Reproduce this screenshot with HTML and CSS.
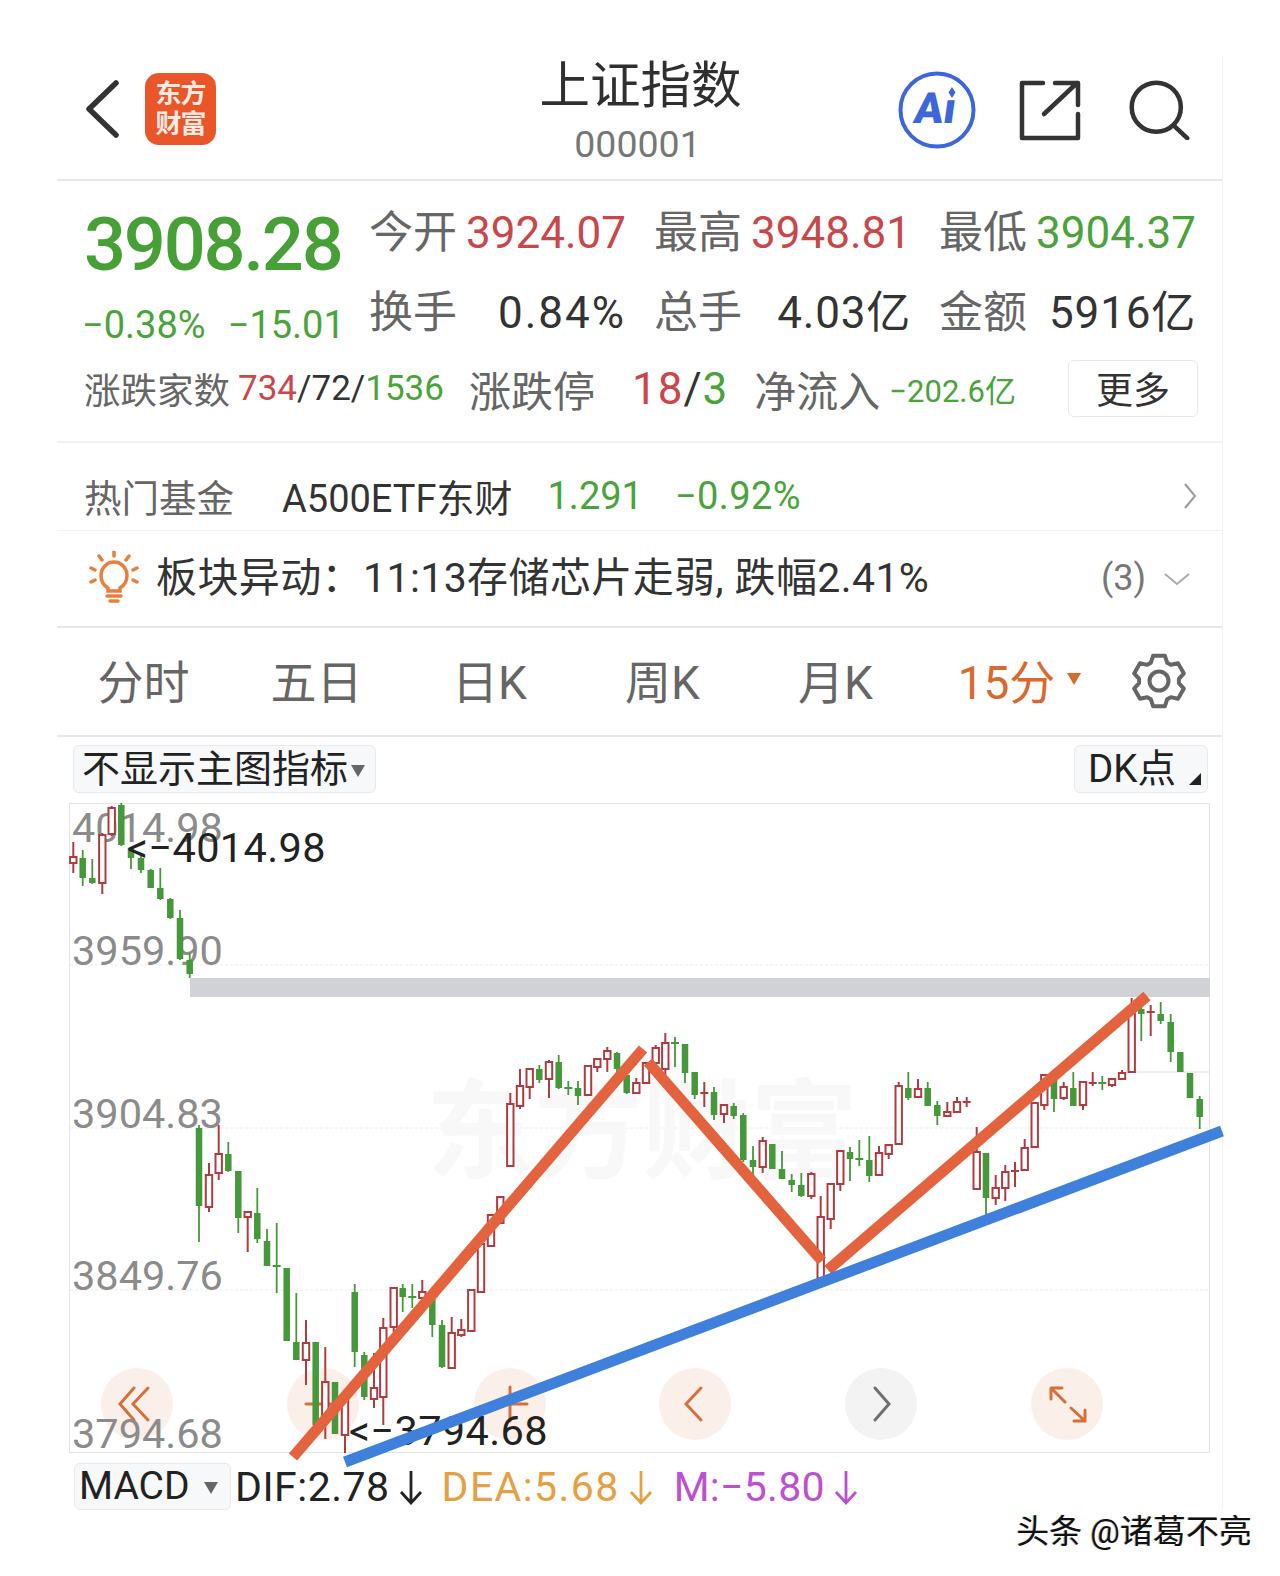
FILE: index.html
```html
<!DOCTYPE html>
<html lang="zh-CN">
<head>
<meta charset="utf-8">
<title>上证指数</title>
<link rel="stylesheet" href="styles.css">
</head>
<body>
<div class="page">
  <main class="app">
    <header class="header">
      <div class="header-left">
        <svg class="back" viewBox="0 0 36 58"><path d="M32 3L5 29L32 55"/></svg>
        <div class="logo"><span>东方</span><span>财富</span></div>
      </div>
      <div class="title-block">
        <div class="title">上证指数</div>
        <div class="code">000001</div>
      </div>
      <div class="header-right">
        <svg class="ai-icon" viewBox="0 0 80 80">
          <circle cx="40" cy="40" r="36.5"/>
          <text class="ai-text" x="23" y="53">Aı</text>
          <path class="ai-star" d="M55 17l3.500 5.500l-3.500 5.500l-3.500-5.500z"/>
        </svg>
        <svg class="share-icon" viewBox="0 0 62 62"><path d="M24 4H3V59H59V35"/><path d="M25 35L58 4M36 4H59V26"/></svg>
        <svg class="search-icon" viewBox="0 0 68 66"><circle cx="31" cy="30" r="27"/><path d="M50 50L65 64"/></svg>
      </div>
    </header>

    <section class="quote">
      <div class="quote-top">
        <div class="price-col">
          <div class="price">3908.28</div>
          <div class="change"><span>−0.38%</span><span>−15.01</span></div>
        </div>
        <div class="stats">
          <div class="stat"><span class="label">今开</span><span class="red">3924.07</span></div>
          <div class="stat"><span class="label">最高</span><span class="red">3948.81</span></div>
          <div class="stat"><span class="label">最低</span><span class="green">3904.37</span></div>
          <div class="stat"><span class="label">换手</span><span class="dark wide">0.84%</span></div>
          <div class="stat"><span class="label">总手</span><span class="dark">4.03亿</span></div>
          <div class="stat"><span class="label">金额</span><span class="dark">5916亿</span></div>
        </div>
      </div>
      <div class="breadth">
        <span class="b-label">涨跌家数</span>
        <span class="b-count"><span class="red">734</span>/72/<span class="green">1536</span></span>
        <span class="b-limit-label">涨跌停</span>
        <span class="b-limit"><span class="red">18</span>/<span class="green">3</span></span>
        <span class="b-flow-label">净流入</span>
        <span class="b-flow green">−202.6亿</span>
        <button class="more">更多</button>
      </div>
    </section>

    <section class="fund">
      <span class="fund-label">热门基金</span>
      <span class="fund-name">A500ETF东财</span>
      <span class="fund-price green">1.291</span>
      <span class="fund-pct green">−0.92%</span>
      <svg class="chev-right" viewBox="0 0 14 28"><path d="M2 2L12 14L2 26"/></svg>
    </section>

    <section class="alert">
      <svg class="sun" viewBox="0 0 52 56">
        <path d="M26 0V5M11 5L14 9M41 5L38 9M3 17L7 19M49 17L45 19M3 31L7 29M49 31L45 29" class="sun-rays"/>
        <path d="M20 37C15 34 13 30 13 24.500C13 17 19 11 26 11C33 11 39 17 39 24.500C39 30 37 34 32 37V40H20Z" class="sun-bulb"/>
        <path d="M19 45H33M22 50H30" class="sun-rays"/>
      </svg>
      <span class="alert-text">板块异动：11:13存储芯片走弱, 跌幅2.41%</span>
      <span class="alert-count">(3)</span>
      <svg class="chev-down" viewBox="0 0 28 14"><path d="M2 2L14 12L26 2"/></svg>
    </section>

    <nav class="tabs">
      <span class="tab">分时</span>
      <span class="tab">五日</span>
      <span class="tab">日K</span>
      <span class="tab">周K</span>
      <span class="tab">月K</span>
      <span class="tab active">15分<i class="tab-caret"></i></span>
      <svg class="gear" viewBox="-29 -29 58 58">
        <path d="M-8.130-18.270L-5.850-25.330L5.850-25.330L8.130-18.270L11.750-16.180L19.010-17.730L24.870-7.600L19.890-2.100L19.890 2.090L24.850 7.600L19.020 17.740L11.770 16.170L8.130 18.270L5.850 25.330L-5.850 25.330L-8.130 18.270L-11.750 16.180L-19.010 17.730L-24.870 7.600L-19.890 2.100L-19.890-2.090L-24.850-7.600L-19.020-17.740L-11.770-16.170Z"/>
        <circle r="9.500"/>
      </svg>
    </nav>

    <div class="toolbar">
      <div class="chip chip-main">不显示主图指标<i class="caret"></i></div>
      <div class="chip chip-dk">DK点<i class="corner"></i></div>
    </div>

    <div class="chart-wrap">
      <svg class="chart" viewBox="69 803 1141 650" width="1141" height="650">
        <rect class="frame" x="69.500" y="803.500" width="1140" height="649"/>
        <path class="grid" d="M70 965H1209M70 1128H1209M70 1290H1209"/>
        <path class="price-line" d="M1130 1072H1209"/>
        <rect class="band" x="190" y="978" width="1020" height="19"/>
        <text class="mark" x="426" y="1170">东方财富</text>

        <circle class="nav" cx="137" cy="1404" r="36"/>
        <circle class="nav" cx="323" cy="1404" r="36"/>
        <circle class="nav" cx="510" cy="1404" r="36"/>
        <circle class="nav" cx="695" cy="1404" r="36"/>
        <circle class="nav nav-off" cx="881" cy="1404" r="36"/>
        <circle class="nav" cx="1067" cy="1404" r="36"/>
        <path class="nav-ico" d="M134 1388L120 1404L134 1420M148 1388L133 1404L148 1420"/>
        <path class="nav-ico" d="M306 1404H340"/>
        <path class="nav-ico" d="M510 1387V1421M493 1404H527"/>
        <path class="nav-ico" d="M701 1388L686 1404L701 1420"/>
        <path class="nav-ico nav-ico-off" d="M875 1388L889 1404L875 1420"/>
        <path class="nav-ico" d="M1051 1388H1062M1051 1388V1399M1051 1388L1065 1402M1085 1421H1074M1085 1421V1410M1085 1421L1071 1408"/>

        <text class="axis" x="72" y="842">4014.98</text>
        <text class="axis" x="72" y="965">3959.90</text>
        <text class="axis" x="72" y="1128">3904.83</text>
        <text class="axis" x="72" y="1290">3849.76</text>
        <text class="axis" x="72" y="1448">3794.68</text>

        <path class="wick-g" d="M82.700 850V886M92.300 859V884M121.300 803V846M131 847V869M141 855V873M150.700 869V888M160.300 868V900M170.300 898V919M180 910V960M189.700 953V978M199 1125V1242M228.300 1142V1172M238.300 1171V1233M257.300 1188V1243M267 1229V1266M276.700 1223V1293M272.700 1266h8M286.700 1268V1341M296.300 1293V1360M315.700 1342V1425M335 1382V1434M354.700 1284V1367M364.300 1352V1400M402.700 1284V1312M412.300 1284V1308M408.300 1297h8M432.300 1295V1337M442 1320V1368M539.300 1065V1083M558.700 1055V1089M568.300 1081V1095M564.300 1088h8M578 1081V1105M617 1052V1077M626.700 1063V1094M675 1037V1067M671 1043h8M685 1044V1083M694.700 1072V1099M714 1087V1120M733.700 1103V1119M743.300 1113V1162M753 1146V1175M772.300 1144V1169M782 1151V1179M791.700 1174V1192M801.300 1173V1197M850 1147V1181M859.300 1140V1166M855.300 1159h8M869.300 1136V1182M908.300 1072V1100M927.700 1082V1106M937.300 1101V1125M986 1153V1217M1054 1080V1112M1073.300 1072V1106M1102.300 1076V1090M1098.300 1083h8M1141.300 1007V1041M1160.700 1002V1024M1170.700 1014V1062M1180.300 1052V1072M1190 1073V1098M1199.700 1096V1129"/>
        <path class="body-g" d="M82.700 858V878M92.300 878V883M121.300 805V845M131 848V858M141 858V870M150.700 870V888M160.300 888V899M170.300 899V918M180 918V959M189.700 960V974M199 1128V1206M228.300 1154V1171M238.300 1171V1218M257.300 1213V1239M267 1241V1266M286.700 1268V1341M296.300 1342V1360M315.700 1342V1425M335 1382V1434M354.700 1292V1352M364.300 1355V1397M402.700 1288V1297M432.300 1297V1325M442 1325V1367M539.300 1069V1080M558.700 1062V1088M578 1088V1096M617 1053V1069M626.700 1075V1093M685 1044V1073M694.700 1072V1095M714 1092V1115M733.700 1106V1116M743.300 1115V1160M753 1160V1167M772.300 1144V1169M782 1169V1179M791.700 1180V1185M801.300 1185V1196M850 1152V1159M869.300 1160V1176M908.300 1088V1098M927.700 1088V1106M937.300 1105V1116M986 1153V1198M1054 1080V1099M1073.300 1088V1106M1141.300 1009V1014M1160.700 1014V1021M1170.700 1022V1052M1180.300 1052V1072M1190 1073V1098M1199.700 1099V1117"/>
        <path class="wick-r" d="M73.300 842V873M102.300 833V894M111.700 806V836M209 1163V1212M218.700 1125V1180M247.700 1212V1252M306 1320V1385M325.300 1347V1439M345 1397V1453M374 1353V1408M383.300 1318V1425M393.700 1288V1332M422.300 1280V1303M451.700 1317V1368M461.300 1319V1337M510.300 1093V1166M520 1069V1109M529.700 1068V1099M549 1060V1098M597.300 1058V1072M607.300 1047V1072M636.300 1078V1094M646 1062V1083M655.700 1045V1063M665.300 1033V1077M704.300 1082V1107M700.300 1093h8M724 1105V1123M762.700 1137V1173M811.300 1172V1199M820.700 1196V1278M830.700 1184V1229M840.300 1151V1191M879 1146V1176M888.700 1144V1159M898.700 1082V1144M918 1079V1097M947.300 1102V1116M957 1097V1112M966.700 1097V1107M962.700 1102h8M976.700 1127V1189M995.700 1175V1205M1005.300 1165V1201M1015 1162V1187M1011 1171h8M1024.700 1139V1170M1044.300 1075V1110M1063.700 1082V1100M1083 1082V1110M1092.700 1072V1086M1088.700 1083h8M1112 1078V1087M1122 1070V1079M1131.700 998V1072M1150.700 1005V1036M1146.700 1012h8"/>
        <path class="body-r" d="M70.100 857h6.400V863h-6.400zM99.100 835h6.400V883h-6.400zM108.500 808h6.400V834h-6.400zM205.800 1175h6.400V1207h-6.400zM215.500 1154h6.400V1173h-6.400zM244.500 1212h6.400V1217h-6.400zM302.800 1343h6.400V1360h-6.400zM322.100 1382h6.400V1422h-6.400zM341.800 1400h6.400V1435h-6.400zM370.800 1388h6.400V1399h-6.400zM380.100 1328h6.400V1397h-6.400zM390.500 1288h6.400V1327h-6.400zM419.100 1292h6.400V1298h-6.400zM448.500 1333h6.400V1368h-6.400zM458.100 1330h6.400V1335h-6.400zM468.100 1290h6.400V1331h-6.400zM477.800 1244h6.400V1292h-6.400zM487.800 1215h6.400V1246h-6.400zM497.100 1197h6.400V1223h-6.400zM507.100 1104h6.400V1166h-6.400zM516.800 1086h6.400V1106h-6.400zM526.500 1069h6.400V1087h-6.400zM545.800 1062h6.400V1079h-6.400zM584.800 1066h6.400V1095h-6.400zM594.100 1059h6.400V1067h-6.400zM604.100 1051h6.400V1059h-6.400zM633.100 1083h6.400V1093h-6.400zM642.800 1063h6.400V1083h-6.400zM652.500 1048h6.400V1063h-6.400zM662.100 1043h6.400V1069h-6.400zM720.800 1105h6.400V1114h-6.400zM759.500 1141h6.400V1167h-6.400zM808.100 1174h6.400V1196h-6.400zM817.500 1217h6.400V1278h-6.400zM827.500 1184h6.400V1219h-6.400zM837.100 1151h6.400V1184h-6.400zM875.800 1153h6.400V1175h-6.400zM885.500 1145h6.400V1154h-6.400zM895.500 1086h6.400V1144h-6.400zM914.800 1089h6.400V1097h-6.400zM944.100 1112h6.400V1116h-6.400zM953.800 1102h6.400V1112h-6.400zM973.500 1152h6.400V1189h-6.400zM992.500 1188h6.400V1198h-6.400zM1002.100 1172h6.400V1188h-6.400zM1021.500 1148h6.400V1170h-6.400zM1031.500 1103h6.400V1147h-6.400zM1041.100 1075h6.400V1105h-6.400zM1060.500 1087h6.400V1098h-6.400zM1079.800 1082h6.400V1105h-6.400zM1108.800 1079h6.400V1085h-6.400zM1118.800 1073h6.400V1079h-6.400zM1128.500 1010h6.400V1072h-6.400z"/>

        <text class="mark-price" x="127" y="862">&lt;−4014.98</text>
        <text class="mark-price" x="349" y="1445">&lt;−3794.68</text>

        <path class="trend-o" d="M293 1457L643 1049"/>
        <path class="trend-o" d="M648 1062L822 1261"/>
        <path class="trend-o" d="M828 1270L1147 996"/>
        <path class="trend-b" d="M345 1462L1222 1131"/>
      </svg>
    </div>

    <div class="macd-row">
      <div class="chip chip-macd">MACD<i class="caret"></i></div>
      <span class="macd-val v-dif"><span>DIF:2.78</span><svg class="arrow" viewBox="0 0 26 36"><path d="M13 2V34M3 23L13 34L23 23"/></svg></span>
      <span class="macd-val v-dea"><span>DEA:5.68</span><svg class="arrow" viewBox="0 0 26 36"><path d="M13 2V34M3 23L13 34L23 23"/></svg></span>
      <span class="macd-val v-m"><span>M:−5.80</span><svg class="arrow" viewBox="0 0 26 36"><path d="M13 2V34M3 23L13 34L23 23"/></svg></span>
    </div>
  </main>
  <footer class="credit">头条 @诸葛不亮</footer>
</div>
</body>
</html>
```
FILE: styles.css
```css
* { box-sizing: border-box; }
html, body { margin: 0; background: #fff; }
body { font-family: Roboto, "Noto Sans CJK SC", sans-serif; color: #333; }
.page { width: 1280px; height: 1576px; overflow: hidden; padding: 56px 0 0 57px; }
.app { width: 1166px; border-right: 1px solid #f3f3f3; }
.red { color: #c9474a; }
.green { color: #4aa33b; }
.dark { color: #333; letter-spacing: 0.800px; }
.dark.wide { letter-spacing: 2px; }

/* header */
.header { height: 125px; display: grid; grid-template-columns: 1fr auto 1fr; border-bottom: 2px solid #e8e8e8; }
.header-left { display: flex; align-items: center; padding: 0 0 17px 27px; gap: 25px; }
.back { width: 36px; height: 58px; fill: none; stroke: #333; stroke-width: 5.500; stroke-linecap: round; stroke-linejoin: round; }
.logo { width: 71px; height: 72px; border-radius: 14px; background: #e9562a; color: #fdebe2; display: flex; flex-direction: column; align-items: center; justify-content: center; font-size: 26px; font-weight: 700; line-height: 30px; letter-spacing: -1px; }
.title-block { text-align: center; padding-top: 2px; }
.title { font-size: 50.500px; line-height: 56px; color: #2f2f2f; padding-left: 2px; }
.code { font-size: 37.500px; line-height: 44px; margin: 8px 0 0 -4px; color: #777; }
.header-right { display: flex; justify-content: flex-end; align-items: center; padding: 0 32px 15px 0; }
.ai-icon { width: 80px; height: 80px; margin-right: 42px; }
.ai-icon circle { fill: none; stroke: #3d66db; stroke-width: 4; }
.ai-text { font-family: Roboto, sans-serif; font-weight: 900; font-size: 43px; fill: #3d66db; transform: skewX(-8deg); }
.ai-star { fill: #3d66db; }
.share-icon { width: 62px; height: 62px; margin-right: 47px; fill: none; stroke: #333; stroke-width: 4.500; stroke-linejoin: round; stroke-linecap: round; }
.search-icon { width: 62px; height: 60px; fill: none; stroke: #333; stroke-width: 5; stroke-linecap: round; }

/* quote */
.quote { height: 262px; padding: 26px 26px 0 27px; border-bottom: 2px solid #f1f1f1; }
.quote-top { display: flex; align-items: flex-start; }
.price-col { width: 285px; margin-top: 1px; }
.price { font-size: 74px; line-height: 74px; font-weight: 500; letter-spacing: -2.200px; color: #46a035; }
.change { display: flex; gap: 22px; font-size: 38px; line-height: 44px; margin: 21px 0 0 -2px; color: #4aa33b; }
.stats { display: grid; grid-template-columns: repeat(3, 257px); column-gap: 28px; row-gap: 30px; padding-top: 1px; }
.stat { display: flex; justify-content: space-between; align-items: center; font-size: 44px; line-height: 50px; }
.label { color: #666; }
.breadth { display: flex; align-items: center; height: 57px; margin-top: 13px; }
.b-label { font-size: 36.500px; color: #666; }
.b-count { font-size: 35px; margin-left: 8px; color: #333; }
.b-limit-label { font-size: 42px; color: #666; margin-left: 25px; }
.b-limit { font-size: 44px; margin-left: 37px; color: #333; letter-spacing: 1px; }
.b-flow-label { font-size: 42px; color: #666; margin-left: 26px; }
.b-flow { font-size: 31px; margin-left: 9px; }
.more { margin-left: auto; margin-right: -2px; width: 130px; height: 57px; background: #fff; border: 1px solid #e8e8e8; border-radius: 6px; font: inherit; font-size: 37px; color: #333; padding: 0 0 16px; }

/* fund */
.fund { height: 88px; display: flex; align-items: center; padding: 18px 25px 0 27px; border-bottom: 1px solid #f1f1f1; font-size: 37.500px; }
.fund-label { color: #666; }
.fund-name { margin-left: 48px; color: #333; font-size: 38px; }
.fund-price { margin-left: 35px; font-size: 38px; }
.fund-pct { margin-left: 32px; font-size: 38px; letter-spacing: 0.400px; }
.chev-right { margin-left: auto; width: 14px; height: 28px; fill: none; stroke: #999; stroke-width: 2; }

/* alert */
.alert { height: 97px; display: flex; align-items: center; padding: 0 31px 0 31px; border-bottom: 2px solid #e8e8e8; font-size: 41px; }
.sun { width: 52px; height: 56px; fill: none; }
.sun-rays { stroke: #e87f3c; stroke-width: 3.500; stroke-linecap: round; }
.sun-bulb { stroke: #e87f3c; stroke-width: 3.500; }
.alert-text { margin-left: 16px; color: #333; letter-spacing: 0.400px; padding-bottom: 10px; }
.alert-count { margin-left: auto; color: #777; font-size: 36px; padding-bottom: 2px; }
.chev-down { margin-left: 17px; width: 28px; height: 14px; fill: none; stroke: #aaa; stroke-width: 2; }

/* tabs */
.tabs { height: 109px; display: grid; grid-template-columns: repeat(6, 173px) 1fr; align-items: center; padding-bottom: 6px; border-bottom: 2px solid #e8e8e8; color: #666; font-size: 46px; }
.tab { text-align: center; position: relative; }
.tab.active { color: #d9692e; padding-left: 22px; }
.tab-caret { display: inline-block; width: 0; height: 0; border: 7px solid transparent; border-top: 12px solid #d9692e; border-bottom: 0; margin: 0 0 14px 12px; }
.gear { width: 58px; height: 58px; justify-self: center; margin: 4px 0 0 1px; fill: none; stroke: #666; stroke-width: 4; stroke-linejoin: round; }

/* toolbar */
.toolbar { display: flex; justify-content: space-between; padding: 8px 14px 10px 16px; }
.chip { height: 48px; display: flex; align-items: center; background: #f7f8fa; border: 1px solid #e8e9ec; border-radius: 6px; color: #222; font-size: 37.500px; line-height: 1; }
.chip-main { width: 303px; padding-left: 8px; font-size: 38px; }
.chip-dk { width: 134px; padding-left: 13px; position: relative; font-size: 38.500px; }
.caret { width: 0; height: 0; border: 7px solid transparent; border-top: 12px solid #666; border-bottom: 0; margin: 3px 0 0 3px; }
.corner { position: absolute; right: 6px; bottom: 7px; width: 0; height: 0; border-style: solid; border-width: 0 0 12px 12px; border-color: transparent transparent #222 transparent; }

/* chart */
.chart-wrap { margin-left: 12px; height: 650px; }
.chart { display: block; overflow: visible; }
.frame { fill: none; stroke: #e3e3e3; }
.grid { fill: none; stroke: #ececec; stroke-dasharray: 3 2; }
.price-line { fill: none; stroke: #dcdcdc; }
.band { fill: #d1d2d6; }
.mark { font-size: 108px; font-weight: 700; fill: #f8f8f8; }
.nav { fill: #fbf0e9; }
.nav-off { fill: #f3f3f3; }
.nav-ico { fill: none; stroke: #d5703a; stroke-width: 3; stroke-linecap: round; }
.nav-ico-off { stroke: #6f6f6f; }
.axis { font-size: 41.500px; fill: #8b8b8b; }
.mark-price { font-size: 41.500px; fill: #222; letter-spacing: 0.350px; }
.wick-g { fill: none; stroke: #46993a; stroke-width: 1.800; }
.body-g { fill: none; stroke: #46993a; stroke-width: 6.500; }
.wick-r { fill: none; stroke: #b03c42; stroke-width: 2; }
.body-r { fill: #fff; stroke: #b03c42; stroke-width: 2; }
.trend-o { fill: none; stroke: #e4633f; stroke-width: 11; }
.trend-b { fill: none; stroke: #3f80dc; stroke-width: 11; }

/* macd */
.macd-row { display: flex; align-items: center; height: 47px; margin-top: 10px; padding-left: 17px; font-size: 41px; }
.chip-macd { width: 157px; height: 47px; padding-left: 4px; font-size: 39px; }
.chip-macd .caret { margin-left: 14px; }
.macd-val { display: flex; align-items: center; gap: 8px; }
.v-dif { margin-left: 4px; color: #222; letter-spacing: 0.500px; }
.v-dea { margin-left: 18px; color: #e5a044; letter-spacing: 1.400px; }
.v-m { margin-left: 20px; color: #bd4fd1; letter-spacing: 0.300px; }
.arrow { width: 26px; height: 36px; fill: none; stroke: currentColor; stroke-width: 2.800; }

/* credit */
.credit { text-align: right; padding-right: 28px; margin-top: 2px; font-size: 33px; line-height: 40px; color: #111; text-shadow: 1px 1px 0 #fff, -1px 0 0 #bbb; }
```
